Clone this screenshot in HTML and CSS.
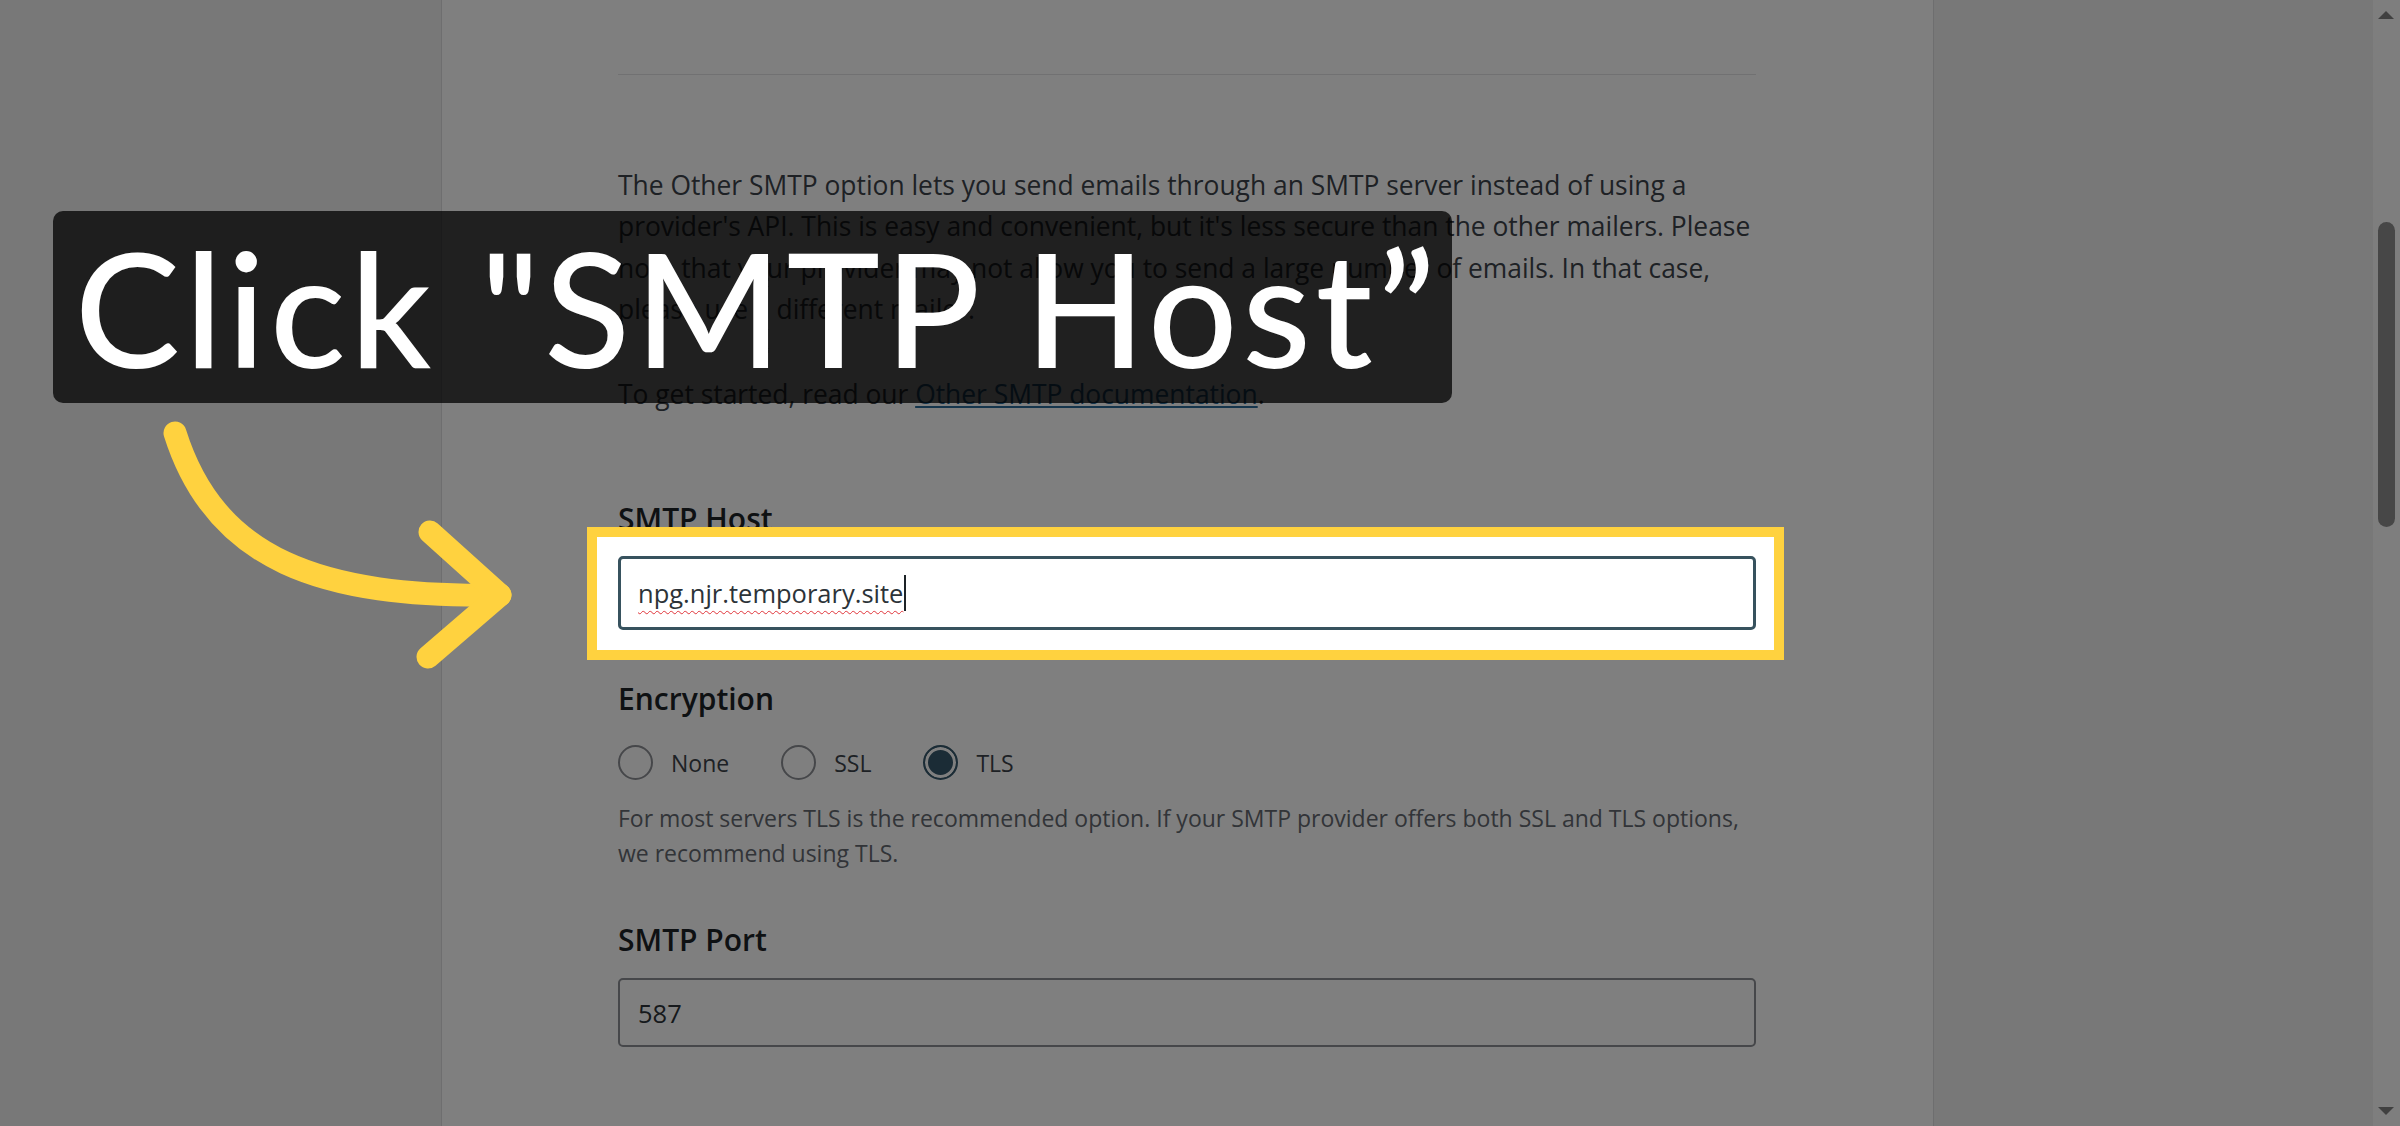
FILE: index.html
```html
<!DOCTYPE html>
<html lang="en">
<head>
  <meta charset="UTF-8">
  <meta name="viewport" content="width=device-width, initial-scale=1.0">
  <title>Other SMTP settings</title>
  <link rel="stylesheet" href="styles.css">
</head>
<body>
  <div class="screen">
    <div class="side"></div>

    <main class="panel">
      <hr class="divider">

      <p class="intro">The Other SMTP option lets you send emails through an SMTP server instead of using a provider's API. This is easy and convenient, but it's less secure than the other mailers. Please note that your provider may not allow you to send a large number of emails. In that case, please use a different mailer.</p>
      <p class="intro intro-last">To get started, read our <a href="#">Other SMTP documentation</a>.</p>

      <div class="field field-host">
        <div class="field-label">SMTP Host</div>
        <div class="field-control">
          <div class="input is-focused"><span class="typed">npg.njr.temporary.site</span><span class="caret"></span></div>
          <div class="spotlight"></div>
        </div>
      </div>

      <div class="field">
        <div class="field-label">Encryption</div>
        <div class="radios">
          <span class="radio"><span class="dot"></span>None</span>
          <span class="radio"><span class="dot"></span>SSL</span>
          <span class="radio"><span class="dot is-checked"></span>TLS</span>
        </div>
        <p class="help">For most servers TLS is the recommended option. If your SMTP provider offers both SSL and TLS options, we recommend using TLS.</p>
      </div>

      <div class="field field-port">
        <div class="field-label">SMTP Port</div>
        <div class="input">587</div>
      </div>
    </main>

    <div class="side side-right"></div>

    <div class="scrollbar">
      <span class="scroll-arrow up"></span>
      <span class="scroll-thumb"></span>
      <span class="scroll-arrow down"></span>
    </div>
  </div>

  <div class="callout">Click "SMTP Host”</div>

  <svg class="pointer" width="600" height="700" viewBox="0 0 600 700">
    <path d="M175 433 C 215 560, 320 598, 500 595" />
    <path d="M430 532 L500 595 L428 657" />
  </svg>
</body>
</html>
```

FILE: styles.css
```css
body {
  margin: 0;
  height: 100vh;
  overflow: hidden;
  background: #f0f0f1;
  font-family: "Open Sans", "Noto Sans", sans-serif;
  color: #3c434a;
}
.screen {
  display: flex;
  height: 100%;
}
.side {
  width: 441px;
  flex-shrink: 0;
}
.side-right {
  width: auto;
  flex: 1;
}
.panel {
  width: 1493px;
  flex-shrink: 0;
  box-sizing: border-box;
  background: #fff;
  border-left: 1px solid #dcdcde;
  border-right: 1px solid #dcdcde;
  padding: 74px 177px 0 176px;
}
.divider {
  margin: 0;
  border: none;
  border-top: 1px solid #e2e2e4;
}
.intro {
  margin: 90px 0 0;
  font-size: 26.4px;
  line-height: 41.3px;
}
.intro-last {
  margin-top: 44px;
}
.intro a {
  color: #2a6a98;
}
.field-label {
  font-size: 30px;
  font-weight: 600;
  line-height: 40px;
  color: #1d2327;
  margin-bottom: 20px;
}
.field-host {
  margin-top: 84px;
}
.field-host .field-label {
  margin-bottom: 17px;
}
.field-host + .field .field-label {
  margin-top: 49px;
  margin-bottom: 26px;
}
.field-control {
  position: relative;
}
.input {
  box-sizing: border-box;
  height: 69px;
  display: flex;
  align-items: center;
  padding: 0 18px;
  border: 2px solid #8c8f94;
  border-radius: 5px;
  background: #fff;
  font-size: 25.5px;
  color: #2c3338;
}
.input.is-focused {
  height: 74px;
  border: 3px solid #37525e;
  padding: 0 17px;
}
.typed {
  text-decoration: underline wavy #e0343a;
  text-decoration-thickness: 1px;
  text-underline-offset: 7px;
}
.caret {
  width: 2px;
  height: 36px;
  margin-left: 1px;
  background: #1d2327;
}
.spotlight {
  position: absolute;
  top: -29px;
  left: -31px;
  right: -28px;
  bottom: -30px;
  border: 10px solid #ffd23f;
  box-shadow: 0 0 0 4000px rgba(0, 0, 0, 0.5);
  z-index: 10;
  pointer-events: none;
}
.radios {
  display: flex;
  align-items: center;
  gap: 52px;
  height: 35px;
  font-size: 23px;
}
.radio {
  display: flex;
  align-items: center;
  gap: 18px;
}
.dot {
  box-sizing: border-box;
  width: 35px;
  height: 35px;
  border-radius: 50%;
  border: 2px solid #8c8f94;
  background: #fff;
}
.dot.is-checked {
  border-color: #37596c;
  background: #37596c;
  box-shadow: inset 0 0 0 3px #fff;
}
.help {
  margin: 21px 0 0;
  font-size: 23px;
  line-height: 35px;
  color: #646970;
}
.field-port .field-label {
  margin-top: 49px;
  margin-bottom: 18px;
}
.scrollbar {
  width: 27px;
  flex-shrink: 0;
  position: relative;
  background: #fdfdfd;
}
.scroll-thumb {
  position: absolute;
  left: 5px;
  top: 222px;
  width: 17px;
  height: 305px;
  border-radius: 9px;
  background: #8e8e8e;
}
.scroll-arrow {
  position: absolute;
  left: 5px;
  width: 0;
  height: 0;
  border-left: 8px solid transparent;
  border-right: 8px solid transparent;
}
.scroll-arrow.up {
  top: 11px;
  border-bottom: 8px solid #808080;
}
.scroll-arrow.down {
  bottom: 11px;
  border-top: 8px solid #808080;
}
.callout {
  position: absolute;
  left: 53px;
  top: 211px;
  width: 1399px;
  height: 192px;
  box-sizing: border-box;
  padding-left: 10px;
  border-radius: 10px;
  background: rgba(0, 0, 0, 0.75);
  display: flex;
  align-items: center;
  justify-content: center;
  color: #fff;
  font-family: Lato, sans-serif;
  font-weight: 500;
  font-size: 158px;
  line-height: 1;
  letter-spacing: 4.5px;
  white-space: nowrap;
  z-index: 20;
}
.pointer {
  position: absolute;
  left: 0;
  top: 0;
  z-index: 20;
  fill: none;
  stroke: #ffd23f;
  stroke-width: 23;
  stroke-linecap: round;
  stroke-linejoin: round;
}
```
